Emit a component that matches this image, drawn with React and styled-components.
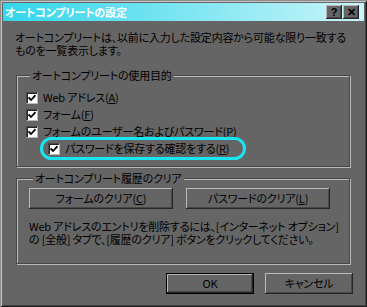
import React from "react";
import styled, { createGlobalStyle } from "styled-components";

const FACE = "#656565";
const HILITE = "#b9b9b9";
const DARK = "#262626";
const SHADE = "#474747";

const GlobalStyle = createGlobalStyle`
  html, body {
    margin: 0;
    padding: 0;
    background: ${FACE};
  }
  body {
    font-family: "Noto Sans CJK JP", "Noto Sans", sans-serif;
    font-size: 11px;
  }
`;

const Window = styled.div`
  width: 367px;
  height: 307px;
  box-sizing: border-box;
  padding: 3px;
  display: flex;
  flex-direction: column;
  background: ${FACE};
  color: #000;
  white-space: nowrap;
  letter-spacing: -0.2px;
  font-feature-settings: "palt";
  box-shadow: inset 1px 1px #8c8c8c, inset -1px -1px #1a1a1a,
    inset 2px 2px #c6c6c6, inset -2px -2px #454545;
`;

const TitleBar = styled.div`
  height: 18px;
  display: flex;
  align-items: center;
  padding: 0 5px 0 2px;
  background: linear-gradient(to right, #33d6ea, #c8f5f9);
`;

const Title = styled.span`
  flex: 1;
  color: #fff;
  font-weight: bold;
  font-size: 11px;
  letter-spacing: -0.1px;
  line-height: 18px;
`;

const CaptionButton = styled.button`
  width: 16px;
  height: 14px;
  padding: 0;
  margin-left: ${(p) => p.$gap || 0}px;
  border: none;
  background: ${FACE};
  display: flex;
  align-items: center;
  justify-content: center;
  font-family: "Liberation Sans", sans-serif;
  font-weight: bold;
  font-size: 11px;
  color: #000;
  box-shadow: inset -1px -1px ${DARK}, inset 1px 1px ${HILITE},
    inset -2px -2px ${SHADE};
`;

const Body = styled.div`
  flex: 1;
  display: flex;
  flex-direction: column;
  padding: 10px 14px 0 12px;
`;

const Intro = styled.p`
  margin: 0;
  line-height: 13px;
`;

const Group = styled.fieldset`
  margin: ${(p) => p.$top}px 0 0 1px;
  padding: ${(p) => p.$pad};
  min-inline-size: 0;
  border: 1px solid ${SHADE};
  box-shadow: inset 1px 1px ${HILITE}, 1px 1px ${HILITE};
`;

const Legend = styled.legend`
  margin-left: 4px;
  padding: 0 2px;
  line-height: 13px;
  background: ${FACE};
`;

const CheckList = styled.div`
  display: flex;
  flex-direction: column;
  align-items: flex-start;
`;

const Row = styled.label`
  height: 17px;
  display: flex;
  align-items: center;
  gap: 5px;
  line-height: 13px;
  margin-left: ${(p) => p.$indent || 0}px;
`;

const HighlightRow = styled(Row)`
  width: 195px;
  padding-left: 5px;
  border-radius: 9px;
  outline: 3px solid #17e6f1;
  outline-offset: 0;
`;

const Box = styled.span`
  width: 12px;
  height: 12px;
  box-sizing: border-box;
  flex: none;
  background: #fff;
  border-top: 1px solid ${SHADE};
  border-left: 1px solid ${SHADE};
  border-right: 1px solid ${HILITE};
  border-bottom: 1px solid ${HILITE};
  box-shadow: inset 1px 1px ${DARK};
  display: flex;
  align-items: center;
  justify-content: center;
`;

const Key = styled.u`
  text-underline-offset: 1px;
`;

const ButtonRow = styled.div`
  display: flex;
  gap: ${(p) => p.$gap}px;
  justify-content: ${(p) => p.$justify || "flex-start"};
`;

const PushButton = styled.button`
  width: ${(p) => p.$w}px;
  height: ${(p) => p.$h || 21}px;
  padding: 0;
  border: none;
  background: ${FACE};
  color: #000;
  font: inherit;
  letter-spacing: inherit;
  font-feature-settings: "palt";
  line-height: 13px;
  box-shadow: ${(p) =>
    p.$default
      ? `inset 0 0 0 1px #000, inset -2px -2px ${DARK}, inset 2px 2px ${HILITE}, inset -3px -3px ${SHADE}`
      : `inset -1px -1px ${DARK}, inset 1px 1px ${HILITE}, inset -2px -2px ${SHADE}`};
`;

const Note = styled.p`
  margin: 11px 0 0 0;
  line-height: 13px;
`;

const Footer = styled(ButtonRow)`
  margin: 9px -3px 0 0;
`;

function CheckMark() {
  return (
    <svg width="8" height="8" viewBox="0 0 8 8">
      <path d="M0.5 3.5 L3 6 L7.5 1.2" fill="none" stroke="#000" strokeWidth="1.8" />
    </svg>
  );
}

function Check({ children, indent }) {
  return (
    <Row $indent={indent}>
      <Box>
        <CheckMark />
      </Box>
      <span>{children}</span>
    </Row>
  );
}

export default function App() {
  return (
    <>
      <GlobalStyle />
      <Window>
        <TitleBar>
          <Title>オートコンプリートの設定</Title>
          <CaptionButton>?</CaptionButton>
          <CaptionButton $gap={1}>✕</CaptionButton>
        </TitleBar>
        <Body>
          <Intro>
            オートコンプリートは、以前に入力した設定内容から可能な限り一致する
            <br />
            ものを一覧表示します。
          </Intro>

          <Group $top={12} $pad="7px 0 9px 9px">
            <Legend>オートコンプリートの使用目的</Legend>
            <CheckList>
              <Check>
                Web アドレス(<Key>A</Key>)
              </Check>
              <Check>
                フォーム(<Key>F</Key>)
              </Check>
              <Check>
                フォームのユーザー名およびパスワード(<Key>P</Key>)
              </Check>
              <HighlightRow $indent={17}>
                <Box>
                  <CheckMark />
                </Box>
                <span>
                  パスワードを保存する確認をする(<Key>R</Key>)
                </span>
              </HighlightRow>
            </CheckList>
          </Group>

          <Group $top={5} $pad="3px 0 17px 12px">
            <Legend>オートコンプリート履歴のクリア</Legend>
            <ButtonRow $gap={13}>
              <PushButton $w={144}>
                フォームのクリア(<Key>C</Key>)
              </PushButton>
              <PushButton $w={144}>
                パスワードのクリア(<Key>L</Key>)
              </PushButton>
            </ButtonRow>
            <Note>
              Web アドレスのエントリを削除するには、[インターネット オプション]
              <br />
              の [全般] タブで、[履歴のクリア] ボタンをクリックしてください。
            </Note>
          </Group>

          <Footer $gap={11} $justify="flex-end">
            <PushButton $w={88} $default>
              OK
            </PushButton>
            <PushButton $w={88}>キャンセル</PushButton>
          </Footer>
        </Body>
      </Window>
    </>
  );
}
